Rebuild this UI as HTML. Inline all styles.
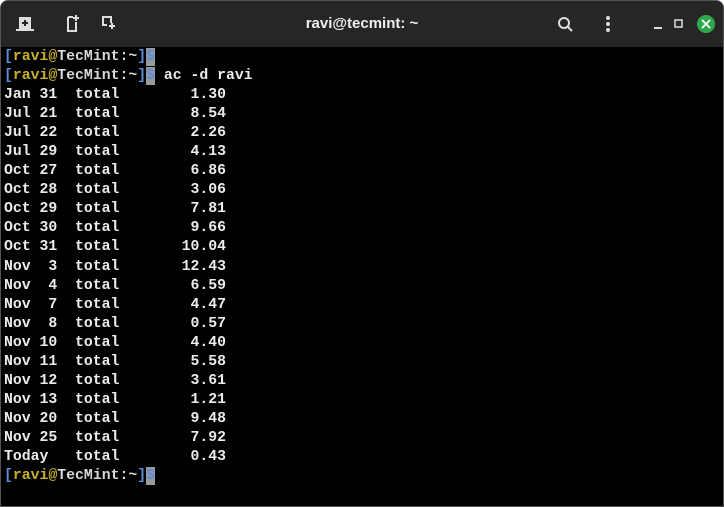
<!DOCTYPE html>
<html><head><style>
html,body{margin:0;padding:0;background:#fff;width:724px;height:507px;overflow:hidden}
.win{position:absolute;left:0;top:0;width:722px;height:505px;border:1px solid #555;border-radius:8px 8px 0 0;background:#000;overflow:hidden}
.bar{position:absolute;left:0;top:0;width:722px;height:46px;background:#262626}
.title{position:absolute;left:0;width:722px;top:14px;text-align:center;color:#eee;font:bold 15px "Liberation Sans",sans-serif}
.term{position:absolute;left:3px;top:47px;font-family:"Liberation Mono",monospace;font-weight:bold;font-size:14.8px;line-height:19.05px;color:#ececec;white-space:pre}
.b{color:#5b8fd9}.y{color:#c8b02a}.w{color:#d8d8d8}
.c{background:#9a9a9a;color:#5b8fd9;padding:1px 0}
</style></head><body>
<div class="win">
<div class="bar">
<svg width="722" height="46" style="position:absolute;left:0;top:0">
<g fill="#ddd">
<path d="M18 16h12v12h3v2H15v-2h3z" /><rect x="23" y="19" width="2" height="6" fill="#262626"/><rect x="21" y="21" width="6" height="2" fill="#262626"/>
</g>
<g fill="none" stroke="#ddd" stroke-width="2">
<path d="M67 16v14h8v-9"/><path d="M67 16h5"/><path d="M75 14v6M72 17h6"/>
<path d="M110 22v-6h-8v8h4"/><path d="M111 22v6M108 25h6" />
<circle cx="563" cy="22" r="5"/><path d="M567 26l4 4"/>
<path d="M653 27h8"/><rect x="674" y="19" width="7" height="7" stroke-width="1.5"/>
</g>
<g fill="#ddd"><circle cx="607" cy="17" r="2"/><circle cx="607" cy="23" r="2"/><circle cx="607" cy="29" r="2"/></g>
<circle cx="705" cy="23" r="9" fill="#2ea84a"/>
<path d="M701 19l8 8M709 19l-8 8" stroke="#fff" stroke-width="1.8"/>
</svg>
<div class="title">ravi@tecmint: ~</div>
</div>
<div class="term"><span class="b">[</span><span class="y">ravi@</span><span class="w">TecMint:~</span><span class="b">]</span><span class="c">$</span>
<span class="b">[</span><span class="y">ravi@</span><span class="w">TecMint:~</span><span class="b">]</span><span class="c">$</span> ac -d ravi
Jan 31  total        1.30
Jul 21  total        8.54
Jul 22  total        2.26
Jul 29  total        4.13
Oct 27  total        6.86
Oct 28  total        3.06
Oct 29  total        7.81
Oct 30  total        9.66
Oct 31  total       10.04
Nov  3  total       12.43
Nov  4  total        6.59
Nov  7  total        4.47
Nov  8  total        0.57
Nov 10  total        4.40
Nov 11  total        5.58
Nov 12  total        3.61
Nov 13  total        1.21
Nov 20  total        9.48
Nov 25  total        7.92
Today   total        0.43
<span class="b">[</span><span class="y">ravi@</span><span class="w">TecMint:~</span><span class="b">]</span><span class="c">$</span></div>
</div>
</body></html>
